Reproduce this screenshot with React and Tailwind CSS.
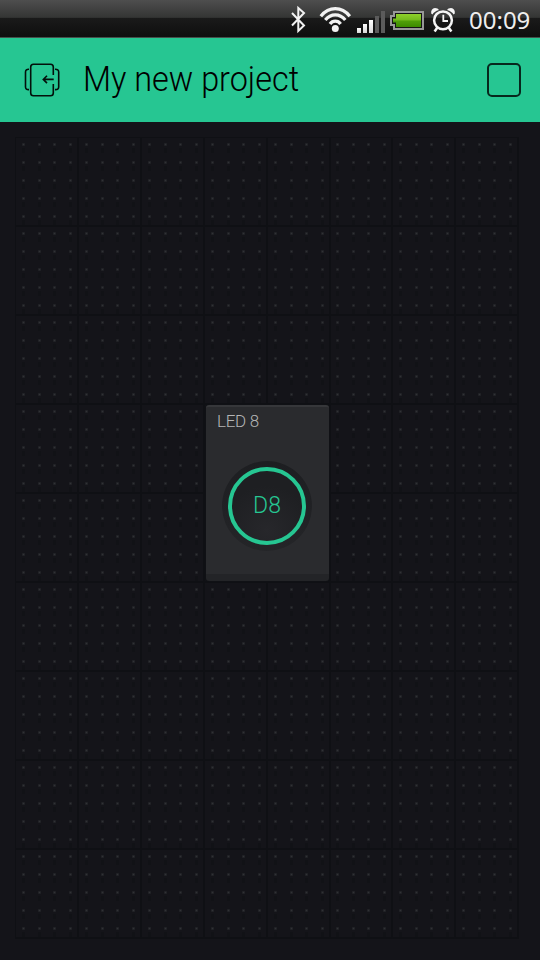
const DOT_COLUMNS = [0, 1, 2, 3];
const DOT_ROWS = [0, 1, 2, 3, 4];

function Cell() {
  return (
    <div className="h-[89px] w-[63px] border-b-2 border-r-2 border-[#0f1014] pl-[6px] pt-[5px]">
      {DOT_ROWS.map((r) => (
        <div key={r} className="grid h-[18px] grid-cols-[16px_15px_16px_3px]">
          {DOT_COLUMNS.map((c) => (
            <div key={c} className="flex w-[3px] flex-col items-center">
              <div className="flex h-[3px] w-[3px] items-center justify-center rounded-[1px] bg-[#222327]">
                <div className="h-px w-px bg-[#303135]" />
              </div>
              <div className="mt-[2px] h-[5px] w-[3px] bg-[#111216]" />
            </div>
          ))}
        </div>
      ))}
    </div>
  );
}

function StatusBar() {
  return (
    <div className="flex h-[38px] w-full border-b border-[#46504c] bg-[linear-gradient(#4e4e4e_0%,#343534_47%,#1a1a1a_49%,#0e0e0e_100%)]">
      <svg className="ml-[280px] h-[37px] w-[180px] shrink-0" viewBox="280 0 180 37" fill="none">
        <defs>
          <linearGradient id="bat" x1="0" y1="0" x2="0" y2="1">
            <stop offset="0" stopColor="#8fd02c" />
            <stop offset="0.48" stopColor="#72b91d" />
            <stop offset="0.52" stopColor="#51a00a" />
            <stop offset="1" stopColor="#3c8b00" />
          </linearGradient>
          <linearGradient id="sig" x1="0" y1="0" x2="0" y2="1">
            <stop offset="0" stopColor="#fff" />
            <stop offset="1" stopColor="#d8d8d8" />
          </linearGradient>
        </defs>
        <path d="M292 13L304 25.5L298.3 31V8L304 13L292 25.5" stroke="#f2f2f2" strokeWidth="2" />
        <g stroke="#f2f2f2" strokeWidth="3.3">
          <path d="M320.8 16.2Q327 8.7 335.3 8.7T349.8 16.2" />
          <path d="M325.3 20Q329.5 14.8 335.3 14.8T345.3 20" />
          <path d="M330 24Q332 21.2 335.3 21.2T340.6 24" />
        </g>
        <circle cx="335.3" cy="28.5" r="3.5" fill="#f2f2f2" />
        <rect x="357" y="28" width="4" height="5" fill="url(#sig)" />
        <rect x="363" y="24" width="4" height="9" fill="url(#sig)" />
        <rect x="369" y="20" width="4" height="13" fill="url(#sig)" />
        <rect x="375" y="16" width="4" height="17" fill="#5b5b5b" />
        <rect x="381" y="11" width="4" height="22" fill="#5b5b5b" />
        <path d="M394 12H423V29H394V25H391V16H394Z" fill="#151515" stroke="#989898" strokeWidth="2" />
        <path d="M396 14H421V27H396V22.5H393V18.5H396Z" fill="url(#bat)" />
        <circle cx="443" cy="20.3" r="8.9" stroke="#f5f5f5" strokeWidth="2.5" />
        <path d="M443.3 14.8V21H448" stroke="#f5f5f5" strokeWidth="1.8" />
        <path d="M437.4 27.5L434.6 31.5M448.6 27.5L451.4 31.5" stroke="#f5f5f5" strokeWidth="2.5" />
        <path d="M431.2 13.5Q430.7 8.5 435 8Q438 8 439 10Q434 11.5 432.5 14.5ZM454.8 13.5Q455.3 8.5 451 8Q448 8 447 10Q452 11.5 453.5 14.5Z" fill="#f5f5f5" />
      </svg>
      <span className="ml-[9px] mt-[3px] font-['Noto_Sans',sans-serif] text-[24px] leading-[34px] text-[#eeeeee]">00:09</span>
    </div>
  );
}

function Header() {
  return (
    <header className="flex h-[84px] w-full items-center bg-[#26c692]">
      <svg className="ml-[24px] h-[36px] w-[37px] shrink-0" viewBox="24 62 37 36" fill="none" stroke="#03100b" strokeWidth="1.6">
        <path d="M53.3 75V67Q53.3 64.3 50.5 64.3H33.5Q30.7 64.3 30.7 67V93Q30.7 95.8 33.5 95.8H50.5Q53.3 95.8 53.3 93V84" />
        <path d="M29 69.2Q25.5 69 25.5 72V87Q25.5 89.8 29 89.6M55 69.2Q58.7 69 58.7 72V87Q58.7 89.8 55 89.6" />
        <path d="M53.7 79.4H43.5M47 75.7L43.3 79.4L47 83.1" />
      </svg>
      <h1 className="ml-[22px] w-[399px] origin-left scale-x-[0.925] whitespace-nowrap font-['Roboto',sans-serif] text-[35px] font-light leading-[40px] text-black">My new project</h1>
      <div className="ml-[5px] h-[34px] w-[34px] shrink-0 rounded-[5px] border-2 border-[#07281d]" />
    </header>
  );
}

function LedWidget() {
  return (
    <div className="absolute left-[191px] top-[268px] flex h-[176px] w-[123px] flex-col rounded-[3px] border-b-[7px] border-t-2 border-b-[#232427] border-t-[#36373a] bg-[#2a2b2e] shadow-[0_0_0_1px_#101115]">
      <div className="ml-[11px] mt-[4px] h-[20px] whitespace-nowrap font-['Roboto',sans-serif] text-[17px] font-light leading-[20px] tracking-[-0.3px] text-[#b4b5b6]">LED 8</div>
      <div className="ml-[16px] mt-[30px] flex h-[90px] w-[90px] items-center justify-center rounded-full bg-[linear-gradient(#1d1e21,#242528)]">
        <div className="flex h-[78px] w-[78px] items-center justify-center rounded-full border-4 border-[#26c692] bg-[radial-gradient(circle_at_50%_85%,#27272b,#1e1f22_65%)] font-['Roboto',sans-serif] text-[23px] font-light leading-none text-[#26c692]">
          <span className="-mt-[2px]">D8</span>
        </div>
      </div>
    </div>
  );
}

export default function App() {
  return (
    <div className="flex h-[960px] w-[540px] flex-col overflow-hidden bg-[#141419]">
      <StatusBar />
      <Header />
      <main className="pl-[15px] pt-[15px]">
        <div className="relative h-[801px] w-[504px]">
          <div className="grid w-[504px] grid-cols-8 border-l border-t border-[#0f1014]">
            {Array.from({ length: 72 }, (_, i) => (
              <Cell key={i} />
            ))}
          </div>
          <LedWidget />
        </div>
      </main>
    </div>
  );
}
